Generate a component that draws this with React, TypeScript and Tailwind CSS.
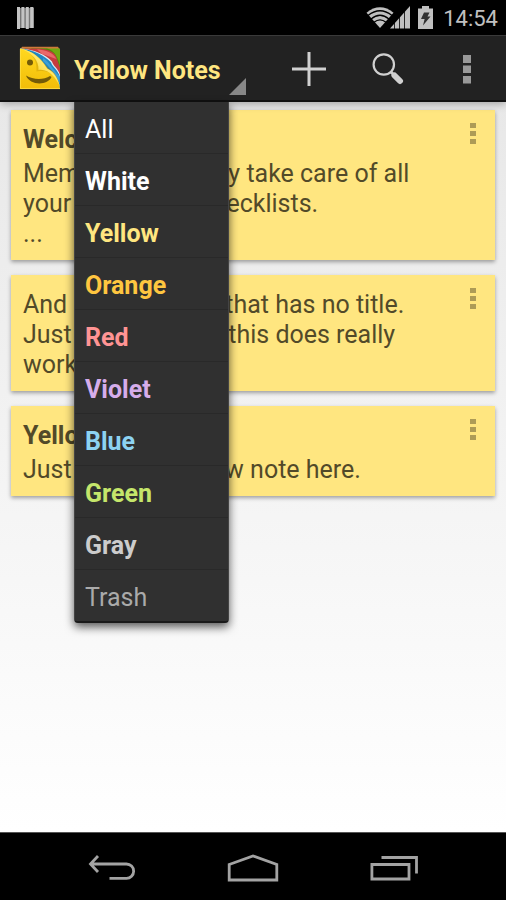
import React, { useState } from 'react';
import clsx from 'clsx';

const FILTERS = [
  { name: 'All', cls: 'text-white' },
  { name: 'White', cls: 'text-white font-bold' },
  { name: 'Yellow', cls: 'text-[#ffe680] font-bold' },
  { name: 'Orange', cls: 'text-[#ffc640] font-bold' },
  { name: 'Red', cls: 'text-[#ff9494] font-bold' },
  { name: 'Violet', cls: 'text-[#d6adeb] font-bold' },
  { name: 'Blue', cls: 'text-[#8cd3f2] font-bold' },
  { name: 'Green', cls: 'text-[#c5e66b] font-bold' },
  { name: 'Gray', cls: 'text-[#cccccc] font-bold' },
  { name: 'Trash', cls: 'text-[#aaaaaa]' },
];

const NOTES = [
  {
    title: 'Welcome',
    lines: [
      'Memorix can safely take care of all',
      'your words and checklists.',
      '...',
    ],
  },
  {
    lines: [
      'And a yellow note that has no title.',
      'Just to check that this does really',
      'work.',
    ],
  },
  {
    title: 'Yellow note',
    lines: ['Just a bigger yellow note here.'],
  },
];

const ICON_NOTIFICATION = (
  <svg width="18" height="22" viewBox="0 0 18 22">
    <rect y="1" width="17" height="20" fill="#777" />
    <path
      d="M0 0H3V22H0zM4.4 0H7.4V21H4.4zM8.8 0H11.8V22H8.8zM13.2 0H16.4V21H13.2z"
      fill="#c4c4c4"
    />
  </svg>
);

const ICON_WIFI = (
  <svg width="28" height="22" viewBox="0 0 28 22">
    <path d="M14 21L.5 5.7Q14 -5 27.5 5.7z" fill="#c0c0c0" />
    <g fill="none" stroke="#000" strokeWidth="1.3">
      <path d="M2 8.5Q14 -1 26 8.5" />
      <path d="M5 12Q14 4.5 23 12" />
      <path d="M8 15.3Q14 10.5 20 15.3" />
    </g>
  </svg>
);

const ICON_SIGNAL = (
  <svg width="20" height="23" viewBox="0 0 20 23">
    <path d="M0 22.5L20 0V22.5z" fill="#c0c0c0" />
    <path
      d="M4.5 15V23M9.5 9V23M14.5 4V23"
      stroke="#000"
      strokeWidth=".8"
    />
  </svg>
);

const ICON_BATTERY = (
  <svg width="15" height="23" viewBox="0 0 15 23">
    <path d="M4 0H11V2.5H15V23H0V2.5H4z" fill="#c0c0c0" />
    <path d="M6 6.5H11.5L9.5 10.5H12.5L5 19.5L6.6 13H3z" fill="#303030" />
  </svg>
);

const LOGO = (
  <svg width="42" height="44" viewBox="0 0 42 44">
    <defs>
      <linearGradient id="note" x1="0" y1="0" x2="0" y2="1">
        <stop offset="0" stopColor="#ffd820" />
        <stop offset="1" stopColor="#f2bd08" />
      </linearGradient>
      <linearGradient id="curl" x1="0" y1="1" x2="1" y2="0">
        <stop offset="0" stopColor="#d9a60a" />
        <stop offset=".35" stopColor="#fbd528" />
        <stop offset=".65" stopColor="#ffec80" />
        <stop offset="1" stopColor="#edc020" />
      </linearGradient>
    </defs>
    <path d="M1 4L3 .8H39L41 4z" fill="#cf7a3a" />
    <path d="M1 2.6H41V43H1z" fill="#71a812" />
    <path d="M12 2.6H28C34 4 38 9 41 20V26z" fill="#55850c" />
    {/* red sheet */}
    <path d="M2 2.6H20C29 4 36 5 38 13L41 22V43H30z" fill="#c63b3e" />
    <path d="M18 3.2C27 4.2 34 6 37.5 13C31 10.5 27 9.5 23 8z" fill="#e8696a" />
    {/* blue sheet */}
    <path d="M1 2.6C16 3.6 27 9 33 15.5C34 20 39 22 41 29V43H30z" fill="#d9edf5" />
    <path d="M1 2.6C15 4 26 10 32 16.5C33.5 21 39 24 41 31V43H30z" fill="#1f86c2" />
    <path d="M24 12C30 15 34 24 40.5 30V37C36 28 31 21 24 15z" fill="#3d9fd6" />
    {/* yellow sheet with the face */}
    <path d="M1 2.6C14 5 22 12 29 23C35 25 40 33 41 43H1z" fill="url(#note)" />
    <path
      d="M6 4C16 10 18 17 17.5 25.5C24 24.5 30 25 34 29C38 34 40 38 41 43C40 34 37 27 29 21z"
      fill="#9a7300"
      opacity=".25"
    />
    <path
      d="M2 2.8C13 5 21 11.5 28 22.5C34 25 39 32 41 41C37 32 30 22.5 19.5 24C20 14 13 7 2 2.8z"
      fill="url(#curl)"
    />
    <circle cx="11" cy="16.5" r="3" fill="#735b08" />
    <path
      d="M7 29.5C14 34 25 34 31 30L32.5 31C29 39.5 11 40 7 29.5z"
      fill="#735b08"
    />
    <path d="M1.4 3V42.6H41" fill="none" stroke="#ffe04a" strokeWidth=".8" />
  </svg>
);

const ICON_ADD = (
  <svg width="34" height="34" viewBox="0 0 34 34">
    <path d="M15.5 0H18.5V34H15.5z" fill="#d0d0d0" />
    <path d="M0 15.5H34V18.5H0z" fill="#d0d0d0" />
  </svg>
);

const ICON_SEARCH = (
  <svg width="32" height="32" viewBox="0 0 32 32" fill="none" stroke="#d0d0d0">
    <circle cx="11.8" cy="11.5" r="10.2" strokeWidth="2.2" />
    <path d="M18.5 18.5L22 22" strokeWidth="3" />
    <path d="M22.5 22.5L28 28" strokeWidth="6" strokeLinecap="round" />
  </svg>
);

const ICON_BACK = (
  <svg width="48" height="26" viewBox="0 0 48 26">
    <path
      d="M2.5 9H38.5A7 7 0 0 1 38.5 23.3H21.5M10 1L2.5 9L10 17"
      fill="none"
      stroke="#a3a3a3"
      strokeWidth="2.8"
    />
  </svg>
);

const ICON_HOME = (
  <svg width="52" height="28" viewBox="0 0 52 28">
    <path
      d="M2.2 10.5L26 2L49.8 10.5V26H2.2z"
      fill="none"
      stroke="#a3a3a3"
      strokeWidth="2.8"
    />
  </svg>
);

const ICON_RECENTS = (
  <svg width="48" height="26" viewBox="0 0 48 26">
    <path
      d="M1.9 9.5H39V24H1.9zM11.5 2.5H46.5V18.5"
      fill="none"
      stroke="#a3a3a3"
      strokeWidth="2.8"
    />
  </svg>
);

const StatusBar = () => (
  <div className="flex h-[35px] items-center bg-black pr-2 pl-[17px] text-[#c0c0c0]">
    {ICON_NOTIFICATION}
    <div className="ml-auto flex items-center">
      {ICON_WIFI}
      <span className="-ml-1">{ICON_SIGNAL}</span>
      <span className="mr-[10px] ml-2">{ICON_BATTERY}</span>
      <span className="pt-0.5 text-[22px] leading-8">14:54</span>
    </div>
  </div>
);

const ActionBar = ({ current, open, onToggle, onSelect }) => {
  const actionCls =
    'flex h-full w-[79px] items-center justify-center pt-0.5 focus:outline-none';

  return (
    <header className="relative z-10 flex h-[67px] items-center border-t border-b-2 border-t-[#3a3a3a] border-b-[#111] bg-[#222] pl-[19px] text-[25px] shadow-[0_2px_8px_rgba(0,0,0,0.3)]">
      {LOGO}
      <div className="relative ml-[13px] h-full w-[172px]">
        <button
          type="button"
          aria-expanded={open}
          onClick={onToggle}
          className={clsx(
            'flex h-full w-full items-center pt-[5px] text-left whitespace-nowrap focus:outline-none',
            current.cls
          )}
        >
          {current.name} Notes
          <svg
            width="17"
            height="17"
            viewBox="0 0 17 17"
            className="mb-[5px] ml-auto self-end"
          >
            <path d="M17 0V17H0z" fill="#888" />
          </svg>
        </button>

        {open && (
          <ul className="absolute top-full left-0 mt-0.5 w-[155px] rounded-b-sm border-x border-b-2 border-x-[#444] border-b-[#1a1a1a] bg-[#303030] shadow-[0_4px_10px_rgba(0,0,0,0.65)]">
            {FILTERS.map((filter) => (
              <li
                key={filter.name}
                className="border-b border-[#292929] last:border-b-0"
              >
                <button
                  type="button"
                  onClick={() => onSelect(filter)}
                  className={clsx(
                    'block w-full px-[10px] pt-[5px] text-left leading-[46px]',
                    filter.cls
                  )}
                >
                  {filter.name}
                </button>
              </li>
            ))}
          </ul>
        )}
      </div>

      <div className="ml-auto flex h-full">
        <button type="button" aria-label="Add note" className={actionCls}>
          {ICON_ADD}
        </button>
        <button type="button" aria-label="Search" className={actionCls}>
          {ICON_SEARCH}
        </button>
        <button type="button" aria-label="More options" className={actionCls}>
          <svg width="8" height="29" viewBox="0 0 8 29">
            <path d="M0 0H8V8H0zM0 10.5H8V18H0zM0 21H8V28.5H0z" fill="#999" />
          </svg>
        </button>
      </div>
    </header>
  );
};

const NoteCard = ({ title, lines }: { title?: string; lines: string[] }) => (
  <article className="flex items-start bg-[#ffe680] pt-[13px] pr-[19px] pb-[11px] pl-3 text-[25px] leading-[30px] text-[#524a29] shadow-[0_2px_4px_rgba(0,0,0,0.35)]">
    <div className="flex-1 pt-0.5">
      {title && <h2 className="mb-1 font-bold">{title}</h2>}
      {lines.map((line) => (
        <p key={line} className="whitespace-nowrap">
          {line}
        </p>
      ))}
    </div>
    <button type="button" aria-label="Note options">
      <svg width="6" height="21" viewBox="0 0 6 21">
        <path d="M0 0H6V5H0zM0 8H6V13H0zM0 16H6V21H0z" fill="#ad9b56" />
      </svg>
    </button>
  </article>
);

const NavBar = () => {
  const navCls = 'flex h-full w-[141px] items-center justify-center pt-0.5';

  return (
    <nav className="flex h-[68px] items-center justify-center border-t border-[#555] bg-black">
      <button type="button" aria-label="Back" className={navCls}>
        {ICON_BACK}
      </button>
      <button type="button" aria-label="Home" className={navCls}>
        {ICON_HOME}
      </button>
      <button type="button" aria-label="Recent apps" className={navCls}>
        {ICON_RECENTS}
      </button>
    </nav>
  );
};

export default function App() {
  const [current, setCurrent] = useState(FILTERS[2]);
  const [open, setOpen] = useState(true);

  return (
    <div className="flex min-h-screen flex-col font-[Roboto,sans-serif]">
      <StatusBar />
      <ActionBar
        current={current}
        open={open}
        onToggle={() => setOpen(!open)}
        onSelect={(filter) => {
          setCurrent(filter);
          setOpen(false);
        }}
      />
      <main className="flex flex-1 flex-col gap-[15px] bg-linear-to-b from-[#e8e8e8] to-white px-[11px] pt-2 pb-4">
        {NOTES.map((note) => (
          <NoteCard key={note.lines[0]} {...note} />
        ))}
      </main>
      <NavBar />
    </div>
  );
}
